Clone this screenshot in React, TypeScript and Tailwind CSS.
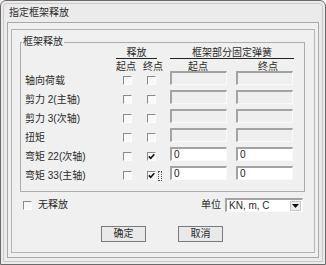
import React from 'react'

const FONT = "font-['Liberation_Sans','Noto_Sans_CJK_SC',sans-serif]"

type Row = { label: string; endChecked: boolean; value: string | null; focus?: boolean }

const rows: Row[] = [
  { label: '轴向荷载', endChecked: false, value: null },
  { label: '剪力 2(主轴)', endChecked: false, value: null },
  { label: '剪力 3(次轴)', endChecked: false, value: null },
  { label: '扭矩', endChecked: false, value: null },
  { label: '弯矩 22(次轴)', endChecked: true, value: '0' },
  { label: '弯矩 33(主轴)', endChecked: true, value: '0', focus: true },
]

function CheckBox({ checked }: { checked?: boolean }) {
  return (
    <span className="flex w-[9px] h-[9px] items-center justify-center border border-t-[#8a8a8a] border-l-[#8a8a8a] border-r-[#fdfdfd] border-b-[#fdfdfd] bg-[#f8f8f8]">
      {checked && (
        <svg width="7" height="7" viewBox="0 0 7 7">
          <path d="M0.8 3.4 L2.7 5.3 L6.3 1.2" fill="none" stroke="#111" strokeWidth="1.6" />
        </svg>
      )}
    </span>
  )
}

function Field({ value }: { value: string | null }) {
  const enabled = value !== null
  return (
    <div
      className={`h-[14px] w-[57px] border-t-2 border-l-2 border-r border-b border-t-[#a3a3a3] border-l-[#a3a3a3] border-r-[#fafafa] border-b-[#fafafa] pl-[2px] text-[10px] leading-[11px] text-[#222] ${
        enabled ? 'bg-white' : 'bg-[#efefef]'
      }`}
    >
      {value}
    </div>
  )
}

export default function App() {
  return (
    <div className={`w-[326px] h-[265px] bg-white ${FONT} text-[10px] text-[#2a2a2a]`}>
      {/* fenêtre */}
      <div className="flex h-full w-full flex-col rounded-t-[6px] border border-[#6a6a6a] bg-[#ebebeb] p-[2px]">
        <div className="flex flex-1 flex-col rounded-t-[4px] border border-[#cacaca] px-[3px] pb-[3px]">
          {/* titre */}
          <div className="flex h-[18px] items-center pl-[2px] text-[10px] leading-none">指定框架释放</div>

          {/* zone client */}
          <div className="flex flex-1 flex-col border border-[#a9a9a9] bg-[#f0f0f0] px-[3px] pb-[4px] pt-[6px]">
            <div className="flex flex-1 flex-col border border-[#b4b4b4]">
              <fieldset className="ml-[8px] mt-[6px] w-[285px] border border-[#adadad] pb-[6px]">
                <legend className="ml-[1px] px-[1px] text-[10px] leading-[12px]">框架释放</legend>

                {/* en-têtes */}
                <div className="flex h-[11px] pl-[4px]">
                  <div className="w-[91px]" />
                  <div className="w-[41px] border-b border-[#222] text-center leading-[10px]">释放</div>
                  <div className="w-[13px]" />
                  <div className="w-[124px] border-b border-[#222] text-center leading-[10px]">框架部分固定弹簧</div>
                </div>
                <div className="flex h-[12px] items-center pl-[95px] pt-[4px] leading-none">
                  <span className="w-[27px]">起点</span>
                  <span className="w-[45px]">终点</span>
                  <span className="w-[70px]">起点</span>
                  <span>终点</span>
                </div>

                {/* lignes */}
                {rows.map((r) => (
                  <div key={r.label} className="flex h-[19px] items-center pl-[4px]">
                    <span className="w-[98px] leading-none">{r.label}</span>
                    <span className="w-[24px]">
                      <CheckBox />
                    </span>
                    <span className="flex w-[23px] items-center gap-[2px]">
                      <CheckBox checked={r.endChecked} />
                      {r.focus && <span className="h-[10px] w-[4px] border border-dotted border-[#555]" />}
                    </span>
                    <div className="flex self-start gap-[9px]">
                      <Field value={r.value} />
                      <Field value={r.value} />
                    </div>
                  </div>
                ))}
              </fieldset>

              {/* options */}
              <div className="mt-[6px] flex h-[14px] items-center pl-[11px] pr-[11px]">
                <CheckBox />
                <span className="ml-[6px] leading-none">无释放</span>
                <span className="ml-auto mr-[4px] leading-none">单位</span>
                <div className="flex h-[14px] w-[78px] items-center border-t-2 border-l-2 border-r border-b border-t-[#a3a3a3] border-l-[#a3a3a3] border-r-[#fafafa] border-b-[#fafafa] bg-white">
                  <span className="flex-1 pl-[2px] leading-none">KN, m, C</span>
                  <span className="mr-[1px] flex h-[10px] w-[11px] items-center justify-center border border-[#c8c8c8] bg-[#ececec]">
                    <svg width="7" height="4" viewBox="0 0 7 4">
                      <path d="M0 0 H7 L3.5 4 Z" fill="#111" />
                    </svg>
                  </span>
                </div>
              </div>

              {/* boutons */}
              <div className="mt-[14px] flex justify-center gap-[32px] pr-[2px]">
                <button className="flex h-[16px] w-[45px] items-center justify-center border border-[#7a7a7a] bg-[#e9e9e9] leading-none">确定</button>
                <button className="flex h-[16px] w-[45px] items-center justify-center border border-[#7a7a7a] bg-[#e9e9e9] leading-none">取消</button>
              </div>
            </div>
          </div>
        </div>
      </div>
    </div>
  )
}
